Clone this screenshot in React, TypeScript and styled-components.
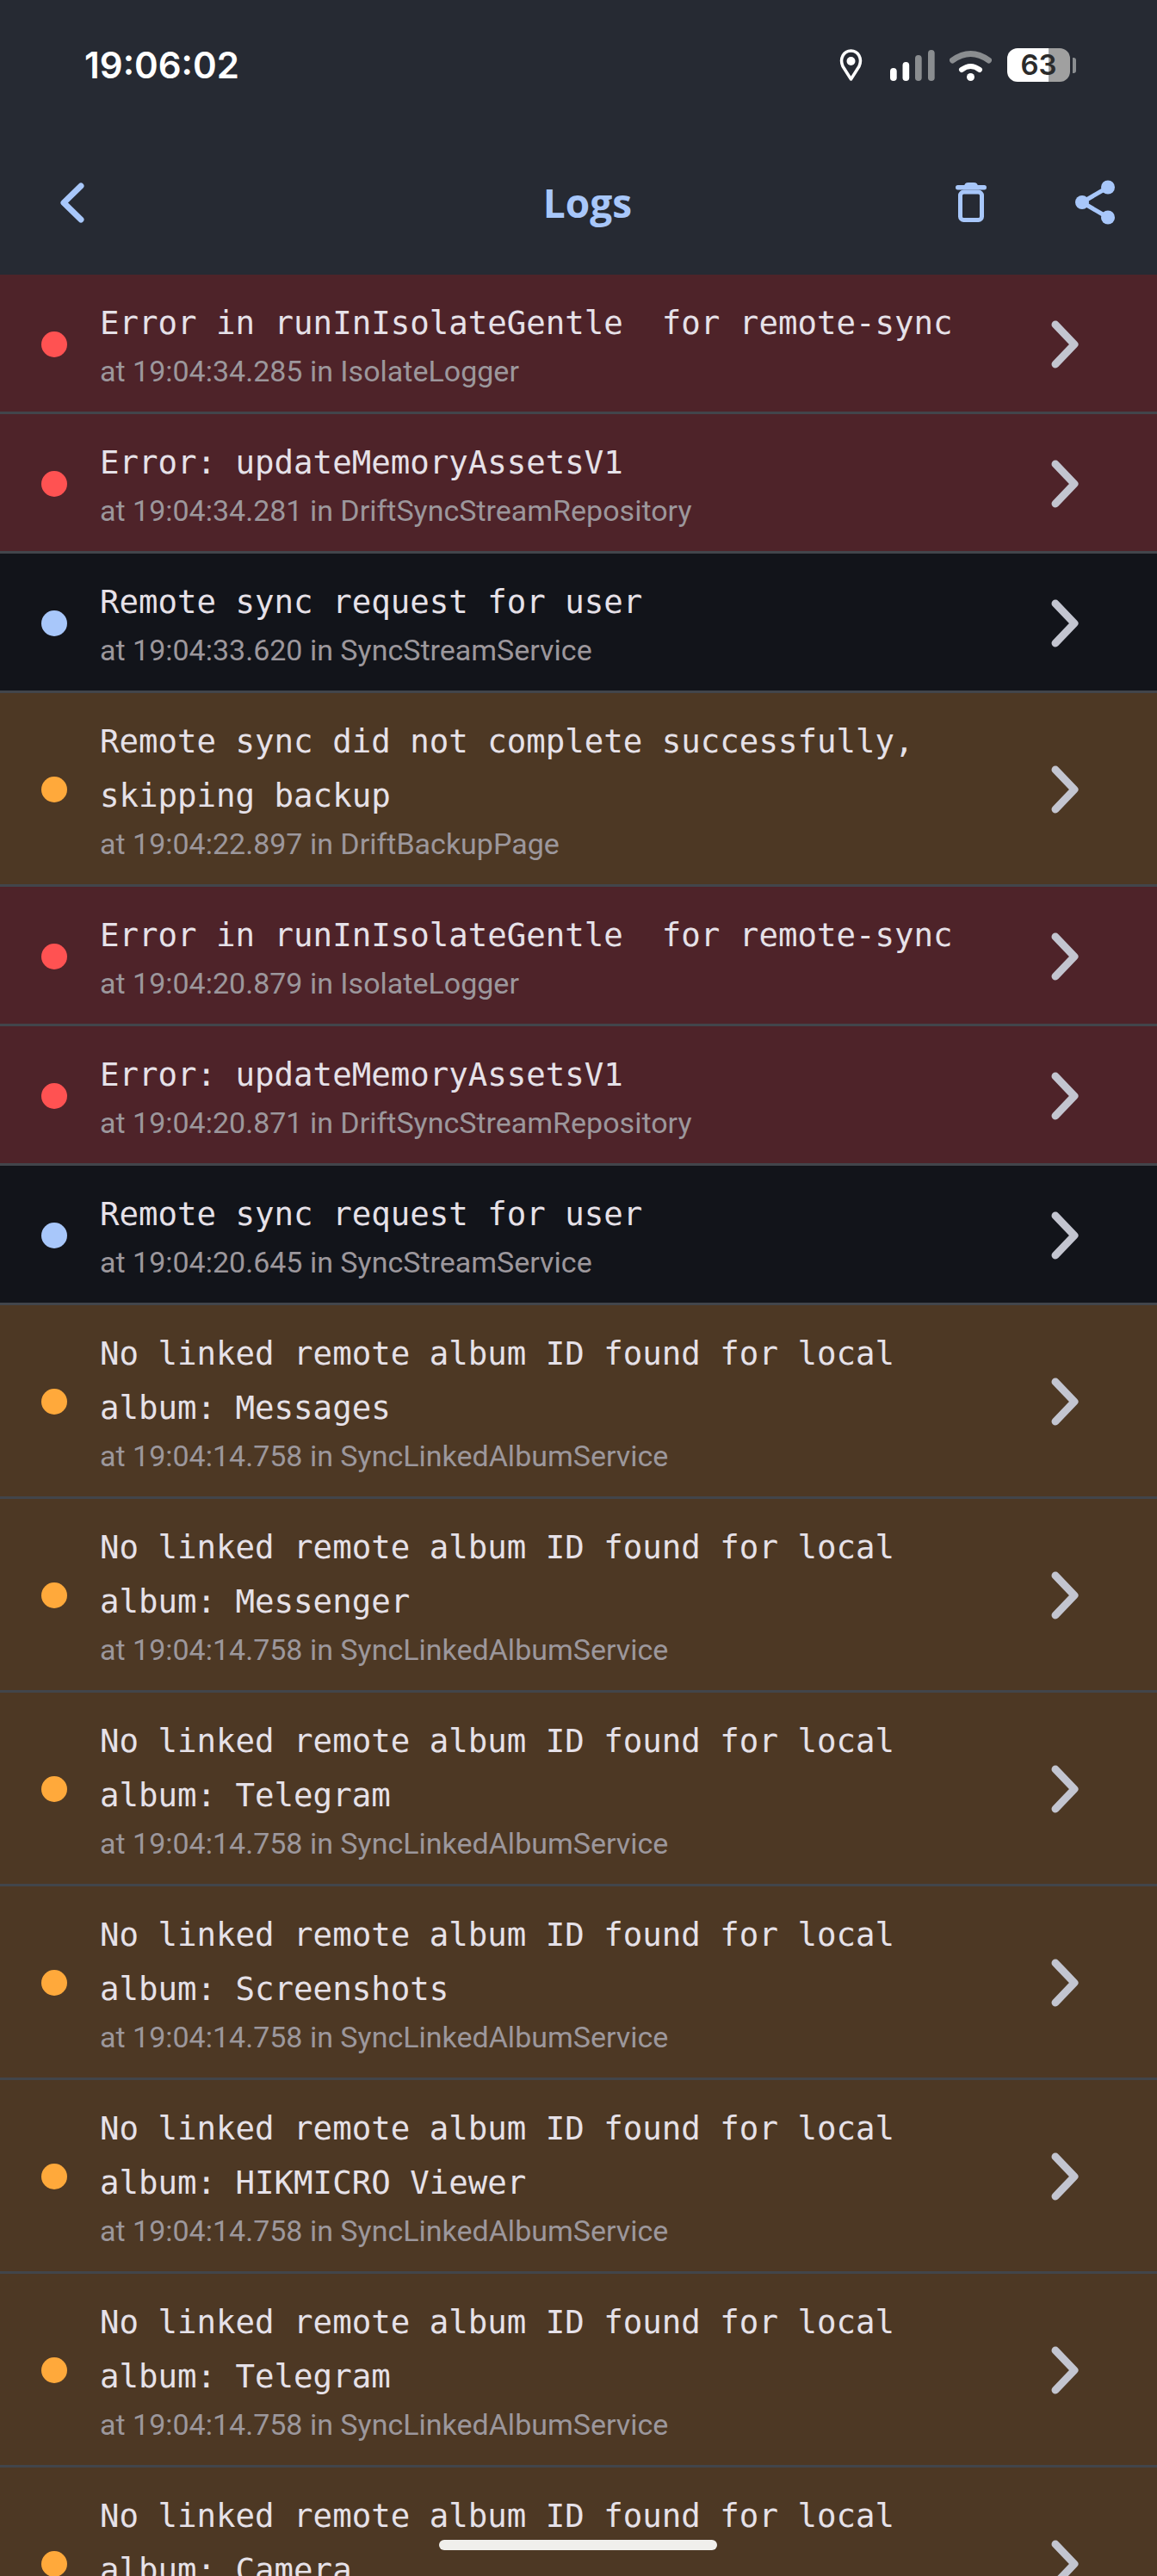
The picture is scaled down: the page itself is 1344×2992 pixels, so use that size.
import React from "react";
import styled, { createGlobalStyle } from "styled-components";

type Level = "error" | "info" | "warn";

const rowColors: Record<Level, string> = {
	error: "#4e2329",
	info: "#12141a",
	warn: "#4d3824"
};
const dotColors: Record<Level, string> = {
	error: "#ff5252",
	info: "#a8c7fa",
	warn: "#ffa93b"
};

const albumLine = "No linked remote album ID found for local";
const albumAt = "at 19:04:14.758 in SyncLinkedAlbumService";

const logs: { level: Level; text: string[]; sub: string }[] = [
	{ level: "error", text: ["Error in runInIsolateGentle  for remote-sync"], sub: "at 19:04:34.285 in IsolateLogger" },
	{ level: "error", text: ["Error: updateMemoryAssetsV1"], sub: "at 19:04:34.281 in DriftSyncStreamRepository" },
	{ level: "info", text: ["Remote sync request for user"], sub: "at 19:04:33.620 in SyncStreamService" },
	{ level: "warn", text: ["Remote sync did not complete successfully,", "skipping backup"], sub: "at 19:04:22.897 in DriftBackupPage" },
	{ level: "error", text: ["Error in runInIsolateGentle  for remote-sync"], sub: "at 19:04:20.879 in IsolateLogger" },
	{ level: "error", text: ["Error: updateMemoryAssetsV1"], sub: "at 19:04:20.871 in DriftSyncStreamRepository" },
	{ level: "info", text: ["Remote sync request for user"], sub: "at 19:04:20.645 in SyncStreamService" },
	{ level: "warn", text: [albumLine, "album: Messages"], sub: albumAt },
	{ level: "warn", text: [albumLine, "album: Messenger"], sub: albumAt },
	{ level: "warn", text: [albumLine, "album: Telegram"], sub: albumAt },
	{ level: "warn", text: [albumLine, "album: Screenshots"], sub: albumAt },
	{ level: "warn", text: [albumLine, "album: HIKMICRO Viewer"], sub: albumAt },
	{ level: "warn", text: [albumLine, "album: Telegram"], sub: albumAt },
	{ level: "warn", text: [albumLine, "album: Camera"], sub: albumAt }
];

const GlobalStyle = createGlobalStyle`
	html, body {
		margin: 0;
		padding: 0;
		background: #262a33;
	}
`;

const Screen = styled.div`
	position: relative;
	width: 1344px;
	height: 2992px;
	overflow: hidden;
	background: #12141a;
	font-family: "Roboto", sans-serif;
`;

const Header = styled.header`
	height: 319px;
	background: #262a33;
	display: flex;
	flex-direction: column;
`;

const StatusBar = styled.div`
	height: 151px;
	padding: 0 94px 0 98px;
	display: flex;
	align-items: center;
	justify-content: space-between;
`;

const Clock = styled.span`
	font-family: "Inter", sans-serif;
	font-weight: 600;
	font-size: 42px;
	color: #ffffff;
`;

const StatusIcons = styled.div`
	display: flex;
	align-items: center;
`;

const Pin = styled.svg`
	width: 27px;
	height: 38px;
	margin-right: 32px;
`;

const Signal = styled.svg`
	width: 52px;
	height: 36px;
	margin-right: 17px;
`;

const Wifi = styled.svg`
	width: 49px;
	height: 36px;
	margin-right: 18px;
`;

const Battery = styled.div`
	width: 73px;
	height: 39px;
	border-radius: 12px;
	background: linear-gradient(to right, #ffffff 66%, #a0a0a0 66%);
	color: #2b2b2b;
	font-family: "Inter", sans-serif;
	font-weight: 600;
	font-size: 33px;
	line-height: 39px;
	text-align: center;
`;

const BatteryNub = styled.div`
	width: 4px;
	height: 18px;
	margin-left: 3px;
	border-radius: 0 3px 3px 0;
	background: #8a8d90;
`;

const Toolbar = styled.div`
	flex: 1;
	display: grid;
	grid-template-columns: 1fr auto 1fr;
	align-items: center;
	padding: 0 49px 0 70px;
`;

const BackIcon = styled.svg`
	width: 28px;
	height: 47px;
`;

const Title = styled.h1`
	margin: 0;
	font-family: "Open Sans", sans-serif;
	font-weight: 700;
	font-size: 46px;
	line-height: 60px;
	color: #a8c7fa;
`;

const Actions = styled.div`
	display: flex;
	justify-content: flex-end;
	align-items: center;
	gap: 103px;
`;

const TrashIcon = styled.svg`
	width: 36px;
	height: 46px;
`;

const ShareIcon = styled.svg`
	width: 46px;
	height: 52px;
`;

const Row = styled.div<{ $level: Level }>`
	display: flex;
	align-items: center;
	padding: 25px 91px 23px 48px;
	background: ${(p) => rowColors[p.$level]};
	border-bottom: 3px solid #42454b;
`;

const Dot = styled.span<{ $level: Level }>`
	flex: none;
	width: 30px;
	height: 30px;
	border-radius: 50%;
	margin-right: 38px;
	background: ${(p) => dotColors[p.$level]};
`;

const RowBody = styled.div`
	flex: 1;
	min-width: 0;
`;

const Message = styled.div`
	font-family: "DejaVu Sans Mono", monospace;
	font-size: 37.4px;
	line-height: 63px;
	color: #e6e1e8;
	white-space: pre;
`;

const Source = styled.div`
	font-size: 34px;
	line-height: 48px;
	color: #9c979c;
	white-space: pre;
`;

const Chevron = styled.svg`
	flex: none;
	width: 32px;
	height: 56px;
`;

const HomeBar = styled.div`
	position: absolute;
	left: 510px;
	top: 2950px;
	width: 323px;
	height: 12px;
	border-radius: 6px;
	background: #f0efec;
`;

export default function App() {
	return (
		<Screen>
			<GlobalStyle />
			<Header>
				<StatusBar>
					<Clock>19:06:02</Clock>
					<StatusIcons>
						<Pin viewBox="0 0 27 38">
							<path d="M13.5 35 L4 20 C0 11 5 2 13.5 2 C22 2 27 11 23 20 Z" fill="none" stroke="#fff" strokeWidth="3.5" strokeLinejoin="round" />
							<circle cx="13.5" cy="14" r="5" fill="#fff" />
						</Pin>
						<Signal viewBox="0 0 52 36">
							<rect x="0" y="21" width="7.7" height="15" rx="3.8" fill="#fff" />
							<rect x="14.5" y="14" width="7.7" height="22" rx="3.8" fill="#fff" />
							<rect x="29" y="6" width="7.7" height="30" rx="3.8" fill="#8a8d90" />
							<rect x="44" y="0" width="7.7" height="36" rx="3.8" fill="#8a8d90" />
						</Signal>
						<Wifi viewBox="0 0 49 36">
							<path d="M3.5 12 Q24.5 -3 45.5 12" fill="none" stroke="#8a8d90" strokeWidth="7" strokeLinecap="round" />
							<path d="M14 23 Q24.5 15 35 23" fill="none" stroke="#fff" strokeWidth="6" strokeLinecap="round" />
							<circle cx="24.5" cy="31.5" r="4.5" fill="#fff" />
						</Wifi>
						<Battery>63</Battery>
						<BatteryNub />
					</StatusIcons>
				</StatusBar>
				<Toolbar>
					<BackIcon viewBox="0 0 28 47">
						<path d="M24 4 L4 23.5 L24 43" fill="none" stroke="#a8c7fa" strokeWidth="7" strokeLinecap="round" strokeLinejoin="round" />
					</BackIcon>
					<Title>Logs</Title>
					<Actions>
						<TrashIcon viewBox="0 0 36 46">
							<path d="M10 5 Q10 0 15 0 H21 Q26 0 26 5 Z" fill="#a8c7fa" />
							<rect x="0" y="3" width="36" height="5.5" rx="2.7" fill="#a8c7fa" />
							<rect x="5.5" y="11" width="25" height="32.5" rx="4" fill="none" stroke="#a8c7fa" strokeWidth="5" />
						</TrashIcon>
						<ShareIcon viewBox="0 0 46 52">
							<path d="M38 8.5 L8 26 L38 43.5" fill="none" stroke="#a8c7fa" strokeWidth="5" />
							<circle cx="38" cy="8.5" r="8" fill="#a8c7fa" />
							<circle cx="8" cy="26" r="8" fill="#a8c7fa" />
							<circle cx="38" cy="43.5" r="8" fill="#a8c7fa" />
						</ShareIcon>
					</Actions>
				</Toolbar>
			</Header>
			{logs.map((log, i) => (
				<Row key={i} $level={log.level}>
					<Dot $level={log.level} />
					<RowBody>
						{log.text.map((line, j) => (
							<Message key={j}>{line}</Message>
						))}
						<Source>{log.sub}</Source>
					</RowBody>
					<Chevron viewBox="0 0 32 56">
						<path d="M5 5 L27 28 L5 51" fill="none" stroke="#c3c5d0" strokeWidth="9" strokeLinecap="round" strokeLinejoin="round" />
					</Chevron>
				</Row>
			))}
			<HomeBar />
		</Screen>
	);
}
